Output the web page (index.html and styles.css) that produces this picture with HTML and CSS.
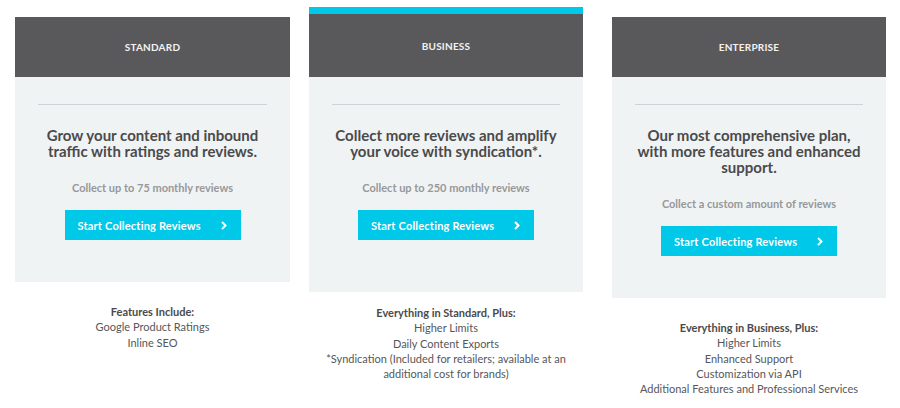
FILE: index.html
```html
<!DOCTYPE html>
<html>
<head>
<meta charset="utf-8">
<link rel="stylesheet" href="styles.css">
</head>
<body>
<div class="plans">
  <div class="col col-standard">
    <div class="card">
      <div class="card-head">STANDARD</div>
      <div class="card-body">
        <div class="rule"></div>
        <h2 class="pitch">Grow your content and inbound<br>traffic with ratings and reviews.</h2>
        <p class="limit">Collect up to 75 monthly reviews</p>
        <a class="cta" href="#">Start Collecting Reviews<svg class="chev" width="6" height="9" viewBox="0 0 6 9"><polyline points="1,1 4.5,4.5 1,8" fill="none" stroke="#fff" stroke-width="2"/></svg></a>
      </div>
    </div>
    <div class="features">
      <div class="feat-title">Features Include:</div>
      <div>Google Product Ratings</div>
      <div>Inline SEO</div>
    </div>
  </div>

  <div class="col col-business">
    <div class="card card-featured">
      <div class="card-head">BUSINESS</div>
      <div class="card-body">
        <div class="rule"></div>
        <h2 class="pitch">Collect more reviews and amplify<br>your voice with syndication*.</h2>
        <p class="limit">Collect up to 250 monthly reviews</p>
        <a class="cta" href="#">Start Collecting Reviews<svg class="chev" width="6" height="9" viewBox="0 0 6 9"><polyline points="1,1 4.5,4.5 1,8" fill="none" stroke="#fff" stroke-width="2"/></svg></a>
      </div>
    </div>
    <div class="features">
      <div class="feat-title">Everything in Standard, Plus:</div>
      <div>Higher Limits</div>
      <div>Daily Content Exports</div>
      <div>*Syndication (Included for retailers; available at an<br>additional cost for brands)</div>
    </div>
  </div>

  <div class="col col-enterprise">
    <div class="card">
      <div class="card-head">ENTERPRISE</div>
      <div class="card-body">
        <div class="rule"></div>
        <h2 class="pitch">Our most comprehensive plan,<br>with more features and enhanced<br>support.</h2>
        <p class="limit">Collect a custom amount of reviews</p>
        <a class="cta" href="#">Start Collecting Reviews<svg class="chev" width="6" height="9" viewBox="0 0 6 9"><polyline points="1,1 4.5,4.5 1,8" fill="none" stroke="#fff" stroke-width="2"/></svg></a>
      </div>
    </div>
    <div class="features">
      <div class="feat-title">Everything in Business, Plus:</div>
      <div>Higher Limits</div>
      <div>Enhanced Support</div>
      <div>Customization via API</div>
      <div>Additional Features and Professional Services</div>
    </div>
  </div>
</div>
</body>
</html>
```

FILE: styles.css
```css
html, body {
  margin: 0;
  padding: 0;
  background: #ffffff;
}

body {
  font-family: Lato, "Noto Sans", "Liberation Sans", sans-serif;
  color: #4a4a4b;
}

.plans {
  display: flex;
  align-items: flex-start;
  padding-top: 7px;
}

.col {
  width: 275px;
  display: flex;
  flex-direction: column;
}

.col-standard {
  margin-left: 15px;
}

.col-business {
  margin-left: 19px;
  width: 274px;
}

.col-enterprise {
  margin-left: 29px;
  width: 274px;
}

.card {
  margin-top: 10px;
  background: #f0f3f4;
}

.card-featured {
  margin-top: 0;
  border-top: 7px solid #00c8e8;
}

.card-head {
  height: 60px;
  background: #59595b;
  color: #f2f2f2;
  font-size: 10px;
  font-weight: 700;
  letter-spacing: 0.2px;
  display: flex;
  align-items: center;
  justify-content: center;
}

.card-featured .card-head {
  height: 63px;
}

.card-body {
  padding: 27px 23px 42px;
  display: flex;
  flex-direction: column;
  align-items: center;
}

.card-featured .card-body {
  padding-bottom: 52px;
}

.rule {
  align-self: stretch;
  height: 1px;
  background: #cfd3d7;
}

.pitch {
  margin: 22px 0 0;
  font-size: 15px;
  line-height: 16px;
  font-weight: 700;
  text-align: center;
  color: #4a4a4b;
  white-space: nowrap;
}

.limit {
  margin: 21px 0 0;
  font-size: 11px;
  line-height: 15px;
  font-weight: 700;
  color: #97989a;
  text-align: center;
}

.cta {
  margin-top: 15px;
  height: 30px;
  width: 176px;
  box-sizing: border-box;
  padding: 0 14px 0 13px;
  background: #00c8e8;
  color: #ffffff;
  font-size: 11px;
  font-weight: 700;
  text-decoration: none;
  display: flex;
  align-items: center;
  justify-content: space-between;
  letter-spacing: 0.2px;
}

.chev {
  display: block;
}

.features {
  margin-top: 22px;
  font-size: 11px;
  line-height: 15.3px;
  text-align: center;
  color: #56575a;
}

.col-business .features {
  margin-top: 13px;
}

.feat-title {
  font-weight: 700;
  color: #4a4a4b;
}
```
